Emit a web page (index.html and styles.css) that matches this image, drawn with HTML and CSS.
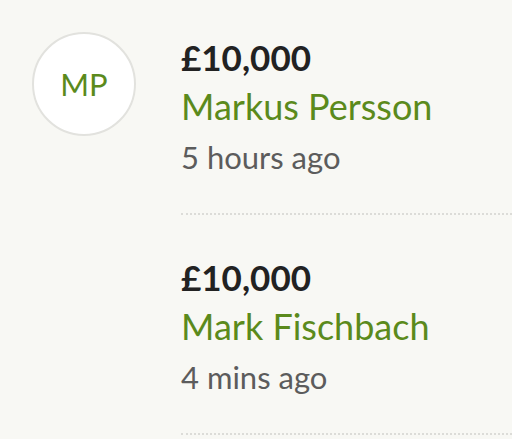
FILE: index.html
```html
<!DOCTYPE html>
<html lang="en">
<head>
<meta charset="utf-8">
<title>Donations</title>
<link rel="stylesheet" href="styles.css">
</head>
<body>
<ul class="donations">
  <li class="donation">
    <div class="avatar-slot"><div class="avatar">MP</div></div>
    <div class="info">
      <div class="amount">£10,000</div>
      <div class="name">Markus Persson</div>
      <div class="time">5 hours ago</div>
    </div>
  </li>
  <li class="donation">
    <div class="avatar-slot"></div>
    <div class="info">
      <div class="amount">£10,000</div>
      <div class="name">Mark Fischbach</div>
      <div class="time">4 mins ago</div>
    </div>
  </li>
</ul>
</body>
</html>
```

FILE: styles.css
```css
html, body {
  margin: 0;
  padding: 0;
  background: #f8f8f4;
  font-family: Lato, "Open Sans", sans-serif;
}
.donations {
  list-style: none;
  margin: 0;
  padding: 0;
}
.donation {
  display: flex;
  padding-left: 32px;
  margin-bottom: 5px;
}
.avatar-slot {
  width: 103px;
  flex: none;
  margin-right: 46px;
  padding-top: 32px;
}
.avatar {
  width: 100px;
  height: 100px;
  border: 2px solid #e2e2de;
  border-radius: 50%;
  background: #fff;
  color: #5b8a1c;
  font-size: 31px;
  display: flex;
  align-items: center;
  justify-content: center;
}
.info {
  flex: 1;
  padding-top: 32px;
  padding-bottom: 29px;
  border-bottom: 2px dotted #dcdcd8;
}
.amount {
  font-weight: 700;
  font-size: 35px;
  line-height: 50px;
  color: #222;
}
.name {
  font-size: 36px;
  line-height: 49px;
  color: #5b8a1c;
}
.time {
  font-size: 31px;
  line-height: 53px;
  color: #5c5c5c;
}
```
